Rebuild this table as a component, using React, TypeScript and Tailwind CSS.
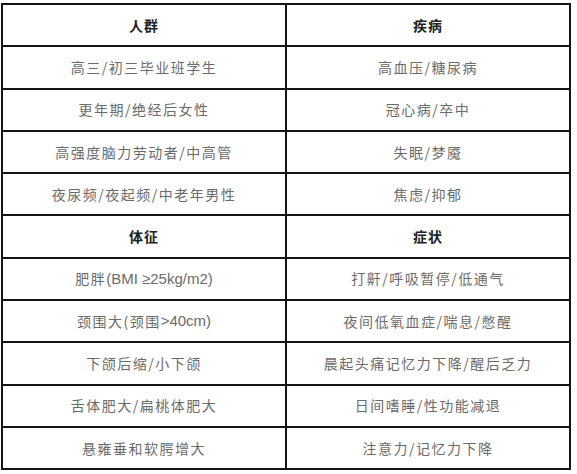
const rows: { head?: boolean; left: string; right: string }[] = [
  { head: true, left: "人群", right: "疾病" },
  { left: "高三/初三毕业班学生", right: "高血压/糖尿病" },
  { left: "更年期/绝经后女性", right: "冠心病/卒中" },
  { left: "高强度脑力劳动者/中高管", right: "失眠/梦魇" },
  { left: "夜尿频/夜起频/中老年男性", right: "焦虑/抑郁" },
  { head: true, left: "体征", right: "症状" },
  { left: "肥胖(BMI ≥25kg/m2)", right: "打鼾/呼吸暂停/低通气" },
  { left: "颈围大(颈围>40cm)", right: "夜间低氧血症/喘息/憋醒" },
  { left: "下颌后缩/小下颌", right: "晨起头痛记忆力下降/醒后乏力" },
  { left: "舌体肥大/扁桃体肥大", right: "日间嗜睡/性功能减退" },
  { left: "悬雍垂和软腭增大", right: "注意力/记忆力下降" },
];

// latin runs (BMI, 25kg/m2, 40cm) are set narrow with no tracking, like the source
const renderText = (text: string) =>
  text.split(/([A-Za-z0-9()>≥ /]{3,})/).map((part, i) =>
    i % 2 === 1 ? (
      <span
        key={i}
        className="tracking-normal text-[15px]"
        style={{ fontFamily: '"Liberation Sans Narrow", "Liberation Sans", sans-serif' }}
      >
        {part}
      </span>
    ) : (
      <span key={i}>{part}</span>
    )
  );

const Cell = ({ text, head }: { text: string; head?: boolean }) => (
  <div
    className={
      "w-[284px] h-full flex items-center justify-center border-r-2 border-b-2 border-[#151515] text-[14px] " +
      (head
        ? "font-bold text-[#222] tracking-[1px]"
        : "text-[#6b6b6b] tracking-[1.5px]")
    }
  >
    {head ? text : renderText(text)}
  </div>
);

export default function App() {
  return (
    <div
      className="w-[577px] h-[474px] bg-white pt-[3px] pl-[1px]"
      style={{ fontFamily: '"Noto Sans CJK SC", "Liberation Sans", sans-serif' }}
    >
      <div className="inline-flex flex-col border-l-2 border-t-2 border-[#151515]">
        {rows.map((r, i) => (
          <div key={i} className="flex h-[42.3px]">
            <Cell text={r.left} head={r.head} />
            <Cell text={r.right} head={r.head} />
          </div>
        ))}
      </div>
    </div>
  );
}
